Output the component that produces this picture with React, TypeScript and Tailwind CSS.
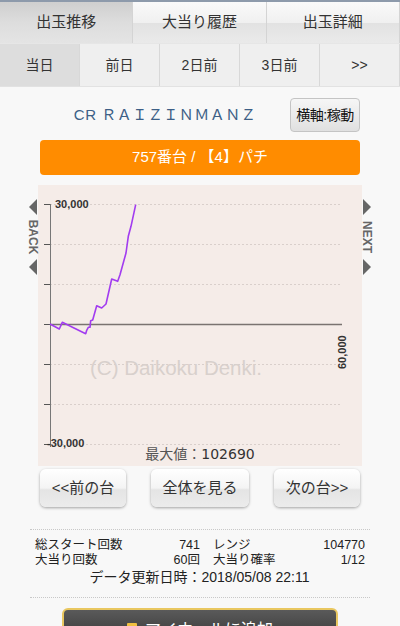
import React from "react";

const jp = "font-['Liberation_Sans','Noto_Sans_CJK_JP',sans-serif]";

const mainTabs = ["出玉推移", "大当り履歴", "出玉詳細"];
const dayTabs = ["当日", "前日", "2日前", "3日前", ">>"];

const line: [number, number][] = [
  [12, 139],
  [21.3, 144],
  [24.3, 137.3],
  [47.7, 148.7],
  [48.7, 145.3],
  [50.3, 142.3],
  [52, 142.3],
  [52.7, 135.7],
  [54.7, 135],
  [58.7, 120.7],
  [63.7, 123],
  [68, 119],
  [73.7, 94],
  [79.7, 96.3],
  [82, 89.7],
  [88, 68],
  [90.3, 51.3],
  [93, 41.3],
  [97.7, 19.7],
];

const SideNav = ({ dir, label }: { dir: "left" | "right"; label: string }) => {
  const tri =
    dir === "left"
      ? "border-y-[8px] border-y-transparent border-r-[8px] border-r-[#666]"
      : "border-y-[8px] border-y-transparent border-l-[8px] border-l-[#666]";
  return (
    <div className="w-[10px] flex flex-col items-center pt-[14px]">
      <div className={`w-0 h-0 ${tri}`} />
      <div className="h-[44px] flex items-center justify-center">
        <span className="rotate-90 text-[12px] font-bold leading-none text-[#666] font-['Liberation_Sans',sans-serif] whitespace-nowrap">
          {label}
        </span>
      </div>
      <div className={`w-0 h-0 ${tri}`} />
    </div>
  );
};

const Chart = () => {
  const grid = [19, 59, 99, 179, 219, 259];
  const ticks = [19, 59, 99, 139, 179, 219, 259];
  return (
    <svg width="324" height="281" className="block">
      {grid.map((y) => (
        <line
          key={y}
          x1={12}
          x2={304}
          y1={y + 0.5}
          y2={y + 0.5}
          stroke="#d9cfcb"
          strokeDasharray="2 2"
        />
      ))}
      {ticks.map((y) => (
        <line key={"t" + y} x1={6} x2={12} y1={y + 0.5} y2={y + 0.5} stroke="#555" />
      ))}
      <line x1={12.5} x2={12.5} y1={19} y2={262} stroke="#777" />
      <line x1={12} x2={304} y1={139.5} y2={139.5} stroke="#7a7370" strokeWidth={1.3} />
      <text
        x={52}
        y={190}
        fill="#d8d0cc"
        fontSize="20.5"
        fontFamily="Liberation Sans, sans-serif"
      >
        (C) Daikoku Denki.
      </text>
      <polyline
        points={line.map((p) => p.join(",")).join(" ")}
        fill="none"
        stroke="#a23cf0"
        strokeWidth={1.6}
        strokeLinejoin="round"
      />
      <text x={17} y={23} fontSize="11" fontWeight="bold" fill="#333" fontFamily="Liberation Sans, sans-serif">
        30,000
      </text>
      <text x={9} y={262} fontSize="11" fontWeight="bold" fill="#333" fontFamily="Liberation Sans, sans-serif">
        -30,000
      </text>
      <text
        fontSize="11"
        fontWeight="bold"
        fill="#333"
        fontFamily="Liberation Sans, sans-serif"
        transform="translate(308 184) rotate(-90)"
      >
        60,000
      </text>
      <text
        x={162}
        y={274}
        textAnchor="middle"
        fontSize="14"
        fill="#333"
        fontFamily="DejaVu Sans, Noto Sans CJK JP, sans-serif"
      >
        <tspan fill="#555">最大値：</tspan>102690
      </text>
    </svg>
  );
};

const GrayButton = ({ children, w }: { children: React.ReactNode; w: string }) => (
  <button
    className={`${w} h-[38px] rounded-[6px] text-[15px] text-[#333] bg-[linear-gradient(to_bottom,#ffffff_0%,#f4f4f4_50%,#e4e4e4_55%,#ececec_100%)] shadow-[0_1px_3px_rgba(0,0,0,0.35)]`}
  >
    {children}
  </button>
);

export default function App() {
  return (
    <div className={`w-[400px] h-[626px] overflow-hidden bg-[#f8f8f8] ${jp}`}>
      <div className="grid grid-cols-3 h-[44px] border-t-2 border-[#8d9aab] border-b border-b-[#e6e6e6]">
        {mainTabs.map((t, i) => (
          <div
            key={t}
            className={`flex items-center justify-center text-[15px] text-[#333] border-r border-[#d4d4d4] ${
              i === 0
                ? "bg-[linear-gradient(to_bottom,#cfcfcf_0%,#dddddd_50%,#e4e4e4_100%)]"
                : "bg-[linear-gradient(to_bottom,#fafafa_0%,#f0f0f0_50%,#e2e2e2_52%,#eaeaea_100%)]"
            }`}
          >
            {t}
          </div>
        ))}
      </div>
      <div className="grid grid-cols-5 h-[43px] border-b border-[#e2e2e2]">
        {dayTabs.map((t, i) => (
          <div
            key={t}
            className={`flex items-center justify-center text-[14px] text-[#333] border-r border-[#d8d8d8] ${
              i === 0 ? "bg-[#dddddd]" : "bg-[#efefef]"
            }`}
          >
            {t}
          </div>
        ))}
      </div>

      <div className="mx-[40px] mt-[11px] flex items-center h-[34px]">
        <div className="flex-1 text-center text-[15px] text-[#3d5f86] tracking-[0.5px]">
          CR ＲＡＩＺＩＮＭＡＮＺ
        </div>
        <button className="w-[70px] h-[34px] rounded-[4px] border border-[#c4c4c4] bg-[linear-gradient(to_bottom,#f6f6f6,#e0e0e0)] text-[14px] text-[#111] tracking-[-0.5px]">
          横軸:稼動
        </button>
      </div>

      <div className="mx-[40px] mt-[8px] h-[35px] rounded-[4px] bg-[#ff8c00] flex items-center justify-center text-[15px] text-white">
        757番台 / 【4】パチ
      </div>

      <div className="mt-[10px] flex justify-center">
        <SideNav dir="left" label="BACK" />
        <div className="w-[324px] h-[281px] bg-[#f5ece8]">
          <Chart />
        </div>
        <SideNav dir="right" label="NEXT" />
      </div>

      <div className="mx-[40px] mt-[3px] flex justify-between">
        <GrayButton w="w-[86px]">&lt;&lt;前の台</GrayButton>
        <GrayButton w="w-[98px]">全体を見る</GrayButton>
        <GrayButton w="w-[86px]">次の台&gt;&gt;</GrayButton>
      </div>

      <div className="mx-[30px] mt-[22px] border-t border-dotted border-[#c8c8c8]" />

      <div className="mx-[35px] mt-[8px] grid grid-cols-[165px_152px] gap-x-[13px] text-[12.5px] leading-[15px] text-[#222]">
        <div className="flex justify-between">
          <span>総スタート回数</span>
          <span>741</span>
        </div>
        <div className="flex justify-between">
          <span>レンジ</span>
          <span>104770</span>
        </div>
        <div className="flex justify-between">
          <span>大当り回数</span>
          <span>60回</span>
        </div>
        <div className="flex justify-between">
          <span>大当り確率</span>
          <span>1/12</span>
        </div>
      </div>
      <div className="text-center text-[14px] leading-[17px] text-[#222] mt-[1px] pr-[1px]">
        データ更新日時：2018/05/08 22:11
      </div>

      <div className="mx-[30px] mt-[11px] border-t border-dotted border-[#c8c8c8]" />

      <div className="mx-[62px] mt-[10px] h-[44px] rounded-[6px] border-2 border-[#e9c760] bg-[linear-gradient(to_bottom,#5a5a5a,#2e2e2e)] flex items-center justify-center gap-[8px] text-white text-[16px]">
        <span className="w-[10px] h-[14px] bg-[#f0c040] rounded-[1px]" />
        マイホールに追加
      </div>
    </div>
  );
}
